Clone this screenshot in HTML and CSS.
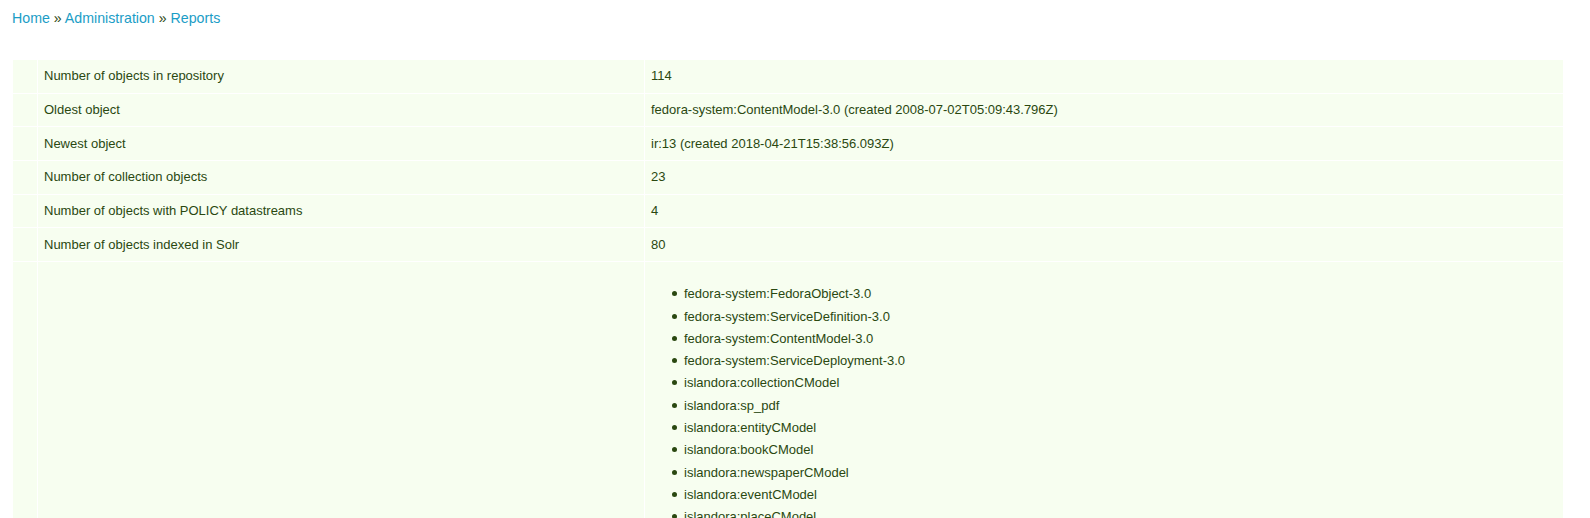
FILE: index.html
```html
<!DOCTYPE html>
<html>
<head>
<meta charset="utf-8">
<title>Reports</title>
<link rel="stylesheet" href="styles.css">
</head>
<body>
<div class="page">
  <div class="breadcrumb"><a href="#">Home</a> » <a href="#">Administration</a> » <a href="#">Reports</a></div>
  <table class="report">
    <tbody>
      <tr><td class="c0"></td><td class="c1">Number of objects in repository</td><td class="c2">114</td></tr>
      <tr><td class="c0"></td><td class="c1">Oldest object</td><td class="c2">fedora-system:ContentModel-3.0 (created 2008-07-02T05:09:43.796Z)</td></tr>
      <tr><td class="c0"></td><td class="c1">Newest object</td><td class="c2">ir:13 (created 2018-04-21T15:38:56.093Z)</td></tr>
      <tr><td class="c0"></td><td class="c1">Number of collection objects</td><td class="c2">23</td></tr>
      <tr><td class="c0"></td><td class="c1">Number of objects with POLICY datastreams</td><td class="c2">4</td></tr>
      <tr><td class="c0"></td><td class="c1">Number of objects indexed in Solr</td><td class="c2">80</td></tr>
      <tr><td class="c0"></td><td class="c1"></td><td class="c2">
        <ul class="models">
          <li>fedora-system:FedoraObject-3.0</li>
          <li>fedora-system:ServiceDefinition-3.0</li>
          <li>fedora-system:ContentModel-3.0</li>
          <li>fedora-system:ServiceDeployment-3.0</li>
          <li>islandora:collectionCModel</li>
          <li>islandora:sp_pdf</li>
          <li>islandora:entityCModel</li>
          <li>islandora:bookCModel</li>
          <li>islandora:newspaperCModel</li>
          <li>islandora:eventCModel</li>
          <li>islandora:placeCModel</li>
          <li>islandora:personCModel</li>
          <li>islandora:organizationCModel</li>
        </ul>
      </td></tr>
    </tbody>
  </table>
</div>
</body>
</html>
```

FILE: styles.css
```css
html, body {
  margin: 0;
  padding: 0;
  background: #ffffff;
}
body {
  font-family: "Liberation Sans", Arial, sans-serif;
  font-size: 13px;
  color: #2a4810;
}
.page {
  padding: 0 0 0 12px;
}
.breadcrumb {
  font-size: 14.2px;
  line-height: 16px;
  padding-top: 10px;
  color: #2a4810;
}
.breadcrumb a {
  color: #1b9dc6;
  text-decoration: none;
}
.report {
  margin-top: 34px;
  margin-left: 1px;
  width: 1550px;
  border-collapse: separate;
  border-spacing: 0;
}
.report td {
  background: #f7fef0;
  border-bottom: 1px solid #ffffff;
  line-height: 16px;
  padding: 8.33px 6px;
  vertical-align: top;
}
.report td.c0 {
  width: 12px;
}
.report td.c1 {
  width: 594px;
  border-left: 1px solid #ffffff;
}
.report td.c2 {
  border-left: 1px solid #ffffff;
}
.models {
  margin: 13px 0 13px;
  padding: 0 0 0 21px;
  list-style: none;
}
.models li {
  line-height: 22.3px;
}
.models li::before {
  content: "";
  display: inline-block;
  width: 5px;
  height: 5px;
  border-radius: 50%;
  background: #2a4810;
  margin-right: 7px;
  vertical-align: 2px;
}
```
